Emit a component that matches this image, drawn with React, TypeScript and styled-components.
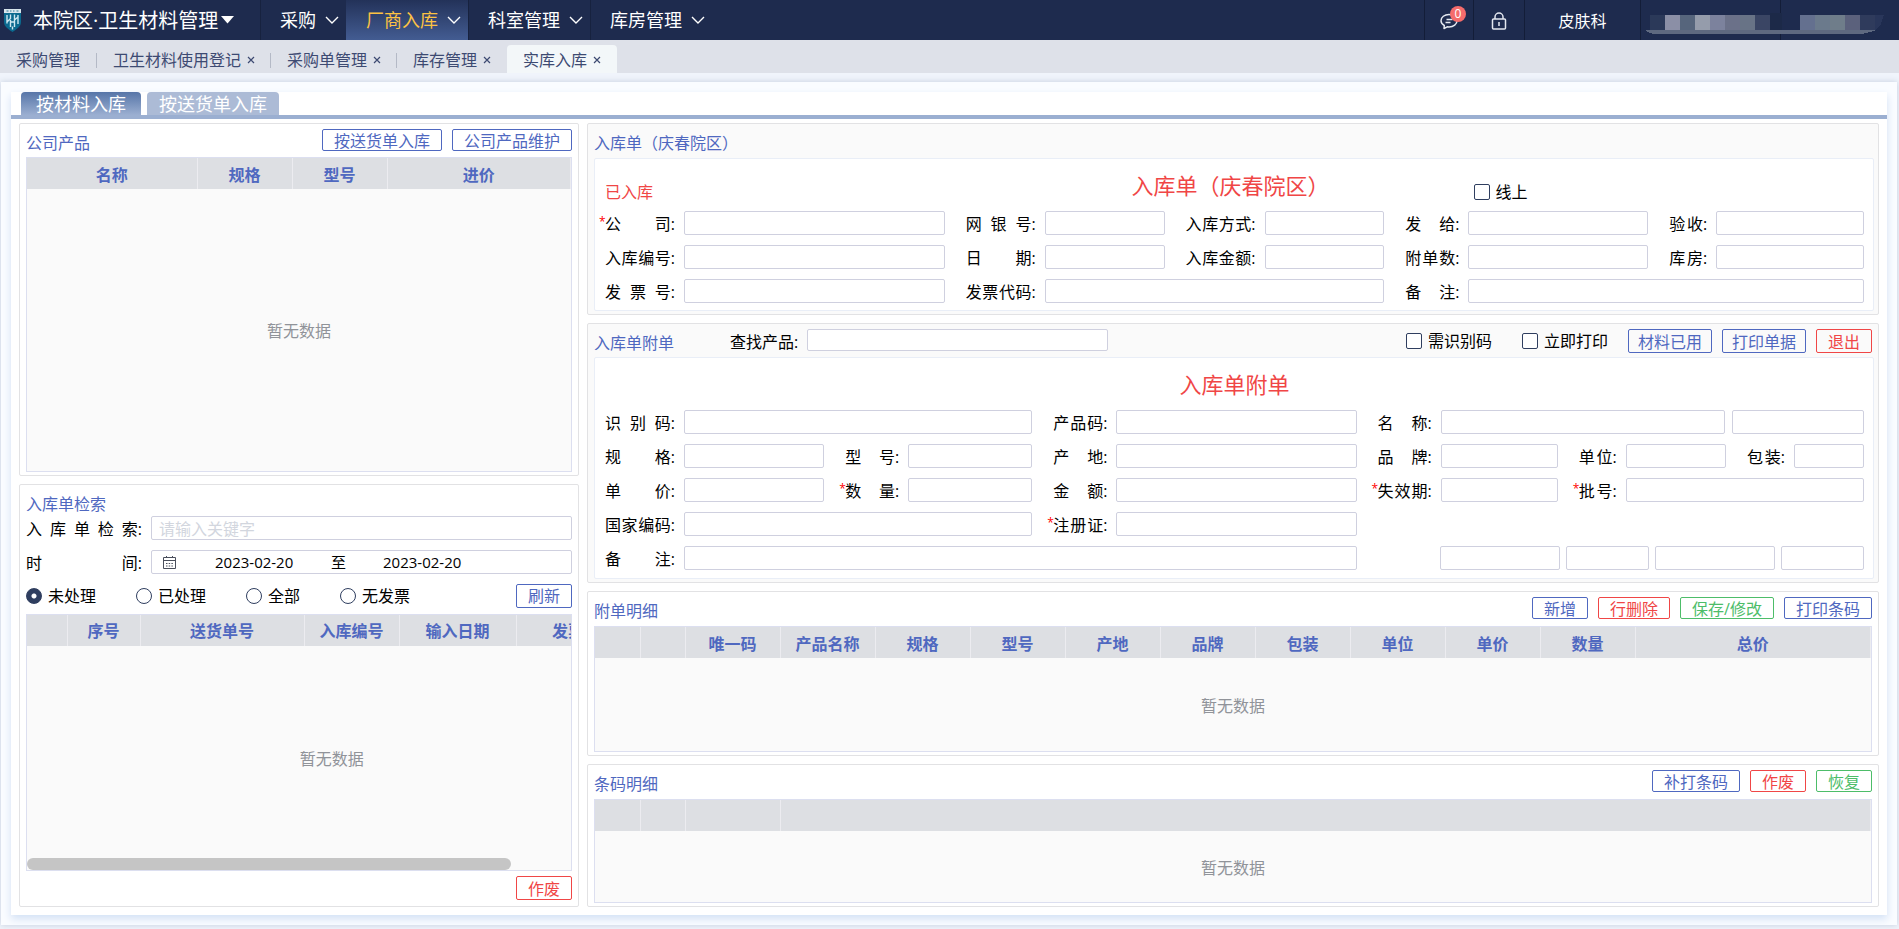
import React, { useId } from "react";
import styled, { createGlobalStyle, css } from "styled-components";

const GlobalStyle = createGlobalStyle`
  *, *::before, *::after { box-sizing: border-box; }
  body {
    margin: 0;
    background: #f0f4fb;
    color: #000;
    font: 16px/24px "Open Sans", "Noto Sans CJK SC", sans-serif;
  }
  button, input { font: inherit; }
`;

type Tone = "blue" | "red" | "green";
const tones: Record<Tone, string> = { blue: "#4f68c0", red: "#f04646", green: "#4dbd69" };

const Page = styled.div`
  min-height: 100vh;
  display: flex;
  flex-direction: column;
`;

/* ---------- header ---------- */

const Header = styled.header`
  height: 40px;
  display: flex;
  background: #1e2b4e;
  color: #fff;
`;

const Brand = styled.button`
  width: 260px;
  padding: 0 0 0 4px;
  display: flex;
  align-items: center;
  border: 0;
  background: none;
  color: inherit;
  font-size: 20px;
  line-height: 28px;
  white-space: nowrap;

  span { margin: 2px 3px 0 12px; }
`;

const NavItem = styled.button<{ $active?: boolean }>`
  padding: 0 7px 0 20px;
  display: flex;
  align-items: center;
  gap: 9px;
  border: 0;
  background: none;
  box-shadow: ${(p) => (p.$active ? "none" : "inset 1px 0 #17223f")};
  color: #fff;
  font-size: 18px;
  line-height: 26px;
  ${(p) =>
    p.$active &&
    css`
      background: linear-gradient(#233259, #435c92);
      color: #fcc243;
    `}
  svg { color: #fff; }
`;

const HeaderTools = styled.div`
  margin-left: auto;
  display: flex;
`;

const Tool = styled.button<{ $width: number }>`
  position: relative;
  width: ${(p) => p.$width}px;
  padding: 2px 0 0;
  display: flex;
  align-items: center;
  justify-content: center;
  border: 0;
  border-left: 1px solid #131d38;
  background: none;
  color: #fff;
  line-height: 24px;
`;

const Badge = styled.span`
  position: absolute;
  top: 6px;
  right: 7px;
  width: 16px;
  height: 16px;
  border-radius: 8px;
  background: #f56c6c;
  font-size: 12px;
  line-height: 16px;
  text-align: center;
`;

const Masked = styled.div`
  width: 259px;
  border-left: 1px solid #131d38;
`;

/* ---------- page tabs ---------- */

const TabBar = styled.nav`
  height: 33px;
  padding-top: 5px;
  display: flex;
  background: #dee1e9;
`;

const PageTab = styled.div<{ $active?: boolean }>`
  height: 28px;
  padding: 2px 16px 0;
  display: flex;
  align-items: center;
  gap: 6px;
  position: relative;
  color: #3d4a72;

  &:first-child { padding-right: 17px; }
  ${(p) =>
    p.$active
      ? css`
          background: #f3f7f9;
          border-radius: 4px 4px 0 0;
        `
      : css`
          & + &::before {
            content: "";
            position: absolute;
            left: -1px;
            top: 8px;
            height: 15px;
            border-left: 1px solid #b4b9c6;
          }
        `}
  a { color: inherit; text-decoration: none; }
  button {
    width: 8px;
    height: 16px;
    padding: 0;
    display: flex;
    align-items: center;
    border: 0;
    background: none;
    color: inherit;
  }
`;

/* ---------- shells ---------- */

const Outer = styled.main`
  flex: 1;
  margin: 9px 2px 4px 1px;
  padding: 10px;
  display: flex;
  flex-direction: column;
  background: #fafcff;
  box-shadow: 0 0 6px #c3ccdc;
`;

const Inner = styled.div`
  flex: 1;
  display: flex;
  flex-direction: column;
  background: #fff;
  box-shadow: 0 4px 8px #d3e1f5;
`;

const ModeTabs = styled.div`
  height: 27px;
  padding-left: 10px;
  display: flex;
  gap: 6px;
  border-bottom: 4px solid #9bafd1;
`;

const ModeTab = styled.button<{ $active?: boolean }>`
  padding: 1px ${(p) => (p.$active ? 15 : 12)}px 0;
  border: 0;
  border-radius: 4px 4px 0 0;
  background: ${(p) => (p.$active ? "linear-gradient(#5675a8, #9bafd1)" : "#acbbd6")};
  color: #fff;
  font-size: 18px;
  line-height: 22px;
`;

const Columns = styled.div`
  flex: 1;
  padding: 4px 8px 8px;
  display: grid;
  grid-template-columns: minmax(0, 560fr) minmax(0, 1292fr);
  gap: 8px;
`;

const Column = styled.div`
  display: flex;
  flex-direction: column;
  gap: 8px;
`;

const Card = styled.section<{ $grow?: number; $tinted?: boolean }>`
  flex: ${(p) => (p.$grow ? `${p.$grow} 1 0px` : "none")};
  padding: 5px ${(p) => (p.$tinted ? 4 : 6)}px 3px 6px;
  display: flex;
  flex-direction: column;
  border: 1px solid #e2e2e4;
  border-radius: 2px;
  background: ${(p) => (p.$tinted ? "#fafafa" : "#fff")};
`;

const CardHead = styled.div<{ $height: number }>`
  height: ${(p) => p.$height}px;
  display: flex;
  align-items: flex-start;
  gap: 10px;
`;

const FormHead = styled(CardHead)`
  padding-right: 2px;
`;

const Heading = styled.h2`
  margin: 2px auto 0 0;
  color: #4f68c0;
  font-size: 16px;
  font-weight: 400;
  line-height: 24px;
`;

const Btn = styled.button<{ $tone?: Tone; $tall?: boolean; $tight?: boolean }>`
  height: ${(p) => (p.$tall ? 24 : 22)}px;
  padding: 1px ${(p) => (p.$tight ? 9 : 11)}px 0;
  border: 1px solid ${(p) => tones[p.$tone ?? "blue"]};
  border-radius: 2px;
  background: transparent;
  color: ${(p) => tones[p.$tone ?? "blue"]};
  line-height: 20px;
  white-space: nowrap;
`;

/* ---------- tables ---------- */

const TableFrame = styled.div`
  flex: 1;
  display: flex;
  flex-direction: column;
  position: relative;
  overflow: hidden;
  border: 1px solid #dcdff0;
  background: #fafafa;
`;

const Grid = styled.table`
  flex: none;
  width: 100%;
  border-collapse: collapse;
  table-layout: fixed;

  th {
    height: 31px;
    padding: 2px 0 0;
    border-right: 1px solid #ececf0;
    background: #dddfe3;
    color: #4f68c0;
    font-weight: 700;
    line-height: 24px;
    white-space: nowrap;
  }
`;

const Scroller = styled.div<{ $width?: number }>`
  flex: 1;
  width: ${(p) => p.$width ?? 100}%;
  display: flex;
  flex-direction: column;
`;

const Empty = styled.p`
  flex: 1;
  margin: 0;
  padding-top: 2px;
  display: flex;
  align-items: center;
  justify-content: center;
  color: #909399;
`;

const ScrollThumb = styled.div`
  position: absolute;
  left: 0;
  bottom: 0;
  width: 89%;
  height: 12px;
  border-radius: 6px;
  background: #c5c5c5;
`;

type Col = [label: string, width?: number];

function DataTable({ columns, span, label }: { columns: Col[]; span?: number; label: string }) {
  return (
    <TableFrame>
      <Scroller $width={span}>
        <Grid aria-label={label}>
          <colgroup>
            {columns.map(([, w], i) => (
              <col key={i} width={w} />
            ))}
          </colgroup>
          <thead>
            <tr>
              {columns.map(([name], i) => (
                <th key={i} scope="col">{name}</th>
              ))}
            </tr>
          </thead>
        </Grid>
        <Empty>暂无数据</Empty>
      </Scroller>
      {span && <ScrollThumb />}
    </TableFrame>
  );
}

/* ---------- forms ---------- */

const FormBox = styled.div<{ $bottom: number }>`
  padding: 13px 9px ${(p) => p.$bottom}px 10px;
  border: 1px solid #e9eef7;
  border-radius: 2px;
  background: #fff;
`;

const TitleRow = styled.div<{ $inset?: number }>`
  height: 39px;
  padding-right: ${(p) => p.$inset ?? 0}px;
  display: grid;
  grid-template-columns: minmax(0, 1fr) auto minmax(0, 1fr);
`;

const FormTitle = styled.h3`
  margin: 0;
  grid-column: 2;
  color: #f04646;
  font-size: 22px;
  font-weight: 400;
  line-height: 26px;
`;

const Status = styled.span`
  padding-top: 8px;
  color: #f04646;
`;

const OnlineCell = styled.div`
  padding: 8px 0 0 144px;
`;

const FormGrid = styled.div<{ $cols: string }>`
  display: grid;
  grid-template-columns: ${(p) => p.$cols};
  gap: 10px 21px;
`;

const FieldBox = styled.div<{ $span: number }>`
  grid-column: span ${(p) => p.$span};
  height: 24px;
  display: flex;
  align-items: center;
  min-width: 0;
`;

const FieldLabel = styled.label<{ $width: number; $required?: boolean }>`
  position: relative;
  flex: none;
  width: ${(p) => p.$width}px;
  margin-right: 9px;
  padding-top: 2px;
  display: flex;
  white-space: nowrap;

  span {
    flex: 1;
    text-align: justify;
    text-align-last: justify;
    white-space: normal;
  }
  ${(p) =>
    p.$required &&
    css`
      &::before {
        content: "*";
        position: absolute;
        left: -6px;
        color: #f00;
        font-size: 12px;
        line-height: 20px;
      }
    `}
`;

const TextBox = styled.input<{ $share?: number }>`
  flex: ${(p) => p.$share ?? 1} 1 0px;
  min-width: 0;
  width: 100%;
  height: 24px;
  padding: 2px 7px 0;
  border: 1px solid #cfd0df;
  border-radius: 2px;
  background: #fff;
  color: #000;
  &::placeholder { color: #d2d6de; opacity: 1; }
`;

const BoxGroup = styled.div`
  flex: 1;
  min-width: 0;
  display: flex;
  gap: 7px;
`;

const Extras = styled.div<{ $span: number }>`
  grid-column: span ${(p) => p.$span};
  padding-left: 62px;
  display: flex;
  gap: 6px;
`;

interface FieldProps {
  label: string;
  width: number;
  span?: number;
  required?: boolean;
  placeholder?: string;
  extra?: string;
}

function Field({ label, width, span = 1, required, placeholder, extra }: FieldProps) {
  const id = useId();
  return (
    <FieldBox $span={span}>
      <FieldLabel htmlFor={id} $width={width} $required={required}>
        <span>{label}</span>:
      </FieldLabel>
      <BoxGroup>
        <TextBox id={id} placeholder={placeholder} $share={extra ? 270 : 1} />
        {extra && <TextBox aria-label={extra} $share={116} />}
      </BoxGroup>
    </FieldBox>
  );
}

const SearchField = styled.div`
  width: 378px;
  margin: 0 auto 0 46px;
  display: flex;

  label { margin: 1px 9px 0 0; white-space: nowrap; }
  input { height: 22px; }
`;

const FirstHeading = styled(Heading)`
  margin-right: 0;
`;

const Choice = styled.label<{ $gap?: number }>`
  margin-right: ${(p) => p.$gap ?? 0}px;
  display: flex;
  align-items: center;
  gap: 6px;
  white-space: nowrap;
`;

const Tick = styled.input`
  appearance: none;
  width: 16px;
  height: 16px;
  margin: 0;
  border: 1px solid #2f3e5f;
  border-radius: 2px;
  background: #fff;
`;

const Radio = styled(Tick)`
  border-radius: 8px;
  &:checked {
    background: radial-gradient(circle, #fff 0 2px, #2f3e5f 3px);
  }
`;

const SearchGrid = styled.div`
  display: grid;
  gap: 10px;
`;

const DateRange = styled.div`
  flex: 1;
  height: 24px;
  padding-left: 11px;
  display: flex;
  align-items: center;
  border: 1px solid #cfd0df;
  border-radius: 2px;
  font-size: 15px;
  line-height: 22px;

  input {
    width: 80px;
    padding: 0;
    border: 0;
    background: none;
    color: #000;
    line-height: 22px;
  }
  input:first-of-type { margin: 0 36px 0 39px; }
  span { margin-right: 37px; }
`;

const RadioRow = styled.div`
  margin-bottom: 6px;
  display: grid;
  grid-template-columns: 110px 110px 94px 1fr auto;
  align-items: center;
`;

const CardFoot = styled.div`
  padding: 5px 0 3px;
  display: flex;
  justify-content: flex-end;
`;

/* ---------- drawings ---------- */

const Logo = () => (
  <svg width="17" height="24" viewBox="0 0 17 24" aria-hidden="true">
    <path d="M0 1h17v13c0 5-4.500 7-8.500 10C4.500 21 0 19 0 14z" fill="#0b6a8f" />
    <path d="M0 1h17v4H0z" fill="#d8e6ec" />
    <path d="M2.500 3h2M6 3h1.500M9 3h1.500M12.500 3h2" stroke="#2d7897" />
    <path d="M3 7v8.500M6.500 6.500v4l-3 3M6.500 12v7M10.500 6.500v12.500M10.500 12l3.500-3M14 7v9M6.500 14h4M8.500 18.500v3" stroke="#cfe8f1" strokeWidth="1.400" fill="none" />
  </svg>
);

const Caret = () => (
  <svg width="13" height="8" viewBox="0 0 13 8" aria-hidden="true">
    <path d="M0 0h13L6.500 7.500z" fill="#fff" />
  </svg>
);

const Chevron = () => (
  <svg width="14" height="8" viewBox="0 0 14 8" fill="none" stroke="currentColor" strokeWidth="1.400" aria-hidden="true">
    <path d="M1 1l6 6 6-6" />
  </svg>
);

const Cross = () => (
  <svg width="8" height="8" viewBox="0 0 8 8" stroke="currentColor" strokeWidth="1.200" aria-hidden="true">
    <path d="M1 1l6 6M7 1L1 7" />
  </svg>
);

const ChatIcon = () => (
  <svg width="18" height="17" viewBox="0 0 18 17" fill="none" stroke="#e4e8f0" strokeWidth="1.500" aria-hidden="true">
    <path d="M4 15.500l.3-3C2 11.300 1 9.800 1 7.800 1 4 4.500 1.500 9 1.500s8 2.800 8 6.300-3.500 6.200-8 6.200c-.6 0-1.200 0-1.800-.2z" strokeLinejoin="round" />
    <path d="M6.500 6.500h6M5.500 9.500h5" />
  </svg>
);

const LockIcon = () => (
  <svg width="16" height="18" viewBox="0 0 16 18" fill="none" stroke="#e4e8f0" strokeWidth="1.500" aria-hidden="true">
    <rect x="1.500" y="7" width="13" height="10" rx="1" />
    <path d="M4 7V5a4 4 0 0 1 8 0v2M8 10v4" />
  </svg>
);

const CalendarIcon = () => (
  <svg width="13" height="14" viewBox="0 0 13 14" fill="none" stroke="#4a4f5c" aria-hidden="true">
    <path d="M.5 2.500h12v11H.5zM.5 5.500h12M3.500 1v2M9.500 1v2" />
    <path d="M3 8.500h7M3 11h7" strokeDasharray="1.500 1.200" />
  </svg>
);

const mosaic: [number, string][] = [
  [9, "#2b3959"], [24, "#8b8fa6"], [39, "#56657c"], [54, "#959cab"], [69, "#7c829d"],
  [84, "#6b7189"], [99, "#687386"], [114, "#3a4564"], [159, "#64708f"], [174, "#6b7a8c"],
  [189, "#6f7d8a"], [204, "#5b617c"], [219, "#2f3b5c"],
];

const UserMosaic = () => (
  <svg width="258" height="40" viewBox="0 0 258 40" shapeRendering="crispEdges" aria-hidden="true">
    <path d="M139.500 0v40" stroke="#131d38" />
    <path d="M129 13h12v17h-12z" fill="#1c2948" />
    {mosaic.map(([x, fill]) => (
      <path key={x} d={`M${x} 15h15v15h-15z`} fill={fill} />
    ))}
    <path d="M234 15h9l-3 9-6 6z" fill="#29365a" />
    <path d="M4 30h231l-6 2-8 2H12l-5-2z" fill="#5e6980" />
  </svg>
);

/* ---------- content ---------- */

const menus = ["采购", "厂商入库", "科室管理", "库房管理"];
const pageTabs = ["采购管理", "卫生材料使用登记", "采购单管理", "库存管理", "实库入库"];

const productCols: Col[] = [["名称", 170], ["规格", 95], ["型号", 95], ["进价"]];
const orderCols: Col[] = [["", 40], ["序号", 73], ["送货单号", 164], ["入库编号", 95], ["输入日期", 117], ["发票号"]];
const detailCols: Col[] = [
  ["", 45], ["", 45], ["唯一码", 95], ["产品名称", 95], ["规格", 95], ["型号", 95], ["产地", 95],
  ["品牌", 95], ["包装", 95], ["单位", 95], ["单价", 95], ["数量", 95], ["总价"],
];
const barcodeCols: Col[] = [["", 45], ["", 45], ["", 95], [""]];

const HEADER_COLS = "340fr 199fr 199fr 243fr 195fr";
const DETAIL_COLS = "219fr 187fr 303fr 180fr 147fr 117fr";

export default function App() {
  const searchId = useId();
  const dateId = useId();
  return (
    <Page>
      <GlobalStyle />
      <Header>
        <Brand type="button">
          <Logo />
          <span>本院区·卫生材料管理</span>
          <Caret />
        </Brand>
        {menus.map((m) => (
          <NavItem key={m} type="button" $active={m === "厂商入库"}>
            {m}
            <Chevron />
          </NavItem>
        ))}
        <HeaderTools>
          <Tool type="button" aria-label="消息" $width={49}>
            <ChatIcon />
            <Badge>0</Badge>
          </Tool>
          <Tool type="button" aria-label="锁定" $width={51}>
            <LockIcon />
          </Tool>
          <Tool type="button" $width={116}>皮肤科</Tool>
          <Masked>
            <UserMosaic />
          </Masked>
        </HeaderTools>
      </Header>

      <TabBar>
        {pageTabs.map((t, i) => (
          <PageTab key={t} $active={t === "实库入库"}>
            <a href="#">{t}</a>
            {i > 0 && (
              <button type="button" aria-label={`关闭${t}`}>
                <Cross />
              </button>
            )}
          </PageTab>
        ))}
      </TabBar>

      <Outer>
        <Inner>
          <ModeTabs>
            <ModeTab type="button" $active>按材料入库</ModeTab>
            <ModeTab type="button">按送货单入库</ModeTab>
          </ModeTabs>
          <Columns>
            <Column>
              <Card $grow={352}>
                <CardHead $height={28}>
                  <Heading>公司产品</Heading>
                  <Btn type="button">按送货单入库</Btn>
                  <Btn type="button">公司产品维护</Btn>
                </CardHead>
                <DataTable label="公司产品" columns={productCols} />
              </Card>

              <Card $grow={424}>
                <CardHead $height={26}>
                  <Heading>入库单检索</Heading>
                </CardHead>
                <SearchGrid>
                  <Field label="入库单检索" width={116} placeholder="请输入关键字" />
                  <FieldBox $span={1}>
                    <FieldLabel htmlFor={dateId} $width={116}>
                      <span>时间</span>:
                    </FieldLabel>
                    <DateRange>
                      <CalendarIcon />
                      <input id={dateId} defaultValue="2023-02-20" />
                      <span>至</span>
                      <input aria-label="结束日期" defaultValue="2023-02-20" />
                    </DateRange>
                  </FieldBox>
                  <RadioRow>
                    {["未处理", "已处理", "全部", "无发票"].map((r, i) => (
                      <Choice key={r}>
                        <Radio type="radio" name="state" defaultChecked={i === 0} />
                        {r}
                      </Choice>
                    ))}
                    <Btn type="button" $tall>刷新</Btn>
                  </RadioRow>
                </SearchGrid>
                <DataTable label="入库单" columns={orderCols} span={112} />
                <CardFoot>
                  <Btn type="button" $tone="red" $tall>作废</Btn>
                </CardFoot>
              </Card>
            </Column>

            <Column>
              <Card $tinted>
                <CardHead $height={29}>
                  <Heading>入库单（庆春院区）</Heading>
                </CardHead>
                <FormBox $bottom={7}>
                  <TitleRow $inset={8}>
                    <Status>已入库</Status>
                    <FormTitle>入库单（庆春院区）</FormTitle>
                    <OnlineCell>
                      <Choice>
                        <Tick type="checkbox" />
                        线上
                      </Choice>
                    </OnlineCell>
                  </TitleRow>
                  <FormGrid $cols={HEADER_COLS}>
                    <Field label="公司" width={70} required />
                    <Field label="网银号" width={70} />
                    <Field label="入库方式" width={70} />
                    <Field label="发给" width={54} />
                    <Field label="验收" width={38} />
                    <Field label="入库编号" width={70} />
                    <Field label="日期" width={70} />
                    <Field label="入库金额" width={70} />
                    <Field label="附单数" width={54} />
                    <Field label="库房" width={38} />
                    <Field label="发票号" width={70} />
                    <Field label="发票代码" width={70} span={2} />
                    <Field label="备注" width={54} span={2} />
                  </FormGrid>
                </FormBox>
              </Card>

              <Card $tinted>
                <FormHead $height={28}>
                  <FirstHeading>入库单附单</FirstHeading>
                  <SearchField>
                    <label htmlFor={searchId}>查找产品:</label>
                    <TextBox id={searchId} />
                  </SearchField>
                  <Choice $gap={20}>
                    <Tick type="checkbox" />
                    需识别码
                  </Choice>
                  <Choice $gap={10}>
                    <Tick type="checkbox" />
                    立即打印
                  </Choice>
                  <Btn type="button" $tall $tight>材料已用</Btn>
                  <Btn type="button" $tall $tight>打印单据</Btn>
                  <Btn type="button" $tall $tone="red">退出</Btn>
                </FormHead>
                <FormBox $bottom={8}>
                  <TitleRow>
                    <FormTitle>入库单附单</FormTitle>
                  </TitleRow>
                  <FormGrid $cols={DETAIL_COLS}>
                    <Field label="识别码" width={70} span={2} />
                    <Field label="产品码" width={54} />
                    <Field label="名称" width={54} span={3} extra="名称补充" />
                    <Field label="规格" width={70} />
                    <Field label="型号" width={54} />
                    <Field label="产地" width={54} />
                    <Field label="品牌" width={54} />
                    <Field label="单位" width={38} />
                    <Field label="包装" width={38} />
                    <Field label="单价" width={70} />
                    <Field label="数量" width={54} required />
                    <Field label="金额" width={54} />
                    <Field label="失效期" width={54} required />
                    <Field label="批号" width={38} span={2} required />
                    <Field label="国家编码" width={70} span={2} />
                    <Field label="注册证" width={54} required />
                    <Extras $span={3} />
                    <Field label="备注" width={70} span={3} />
                    <Extras $span={3}>
                      <TextBox $share={104} aria-label="备注一" />
                      <TextBox $share={67} aria-label="备注二" />
                      <TextBox $share={104} aria-label="备注三" />
                      <TextBox $share={67} aria-label="备注四" />
                    </Extras>
                  </FormGrid>
                </FormBox>
              </Card>

              <Card $grow={166}>
                <CardHead $height={29}>
                  <Heading>附单明细</Heading>
                  <Btn type="button">新增</Btn>
                  <Btn type="button" $tone="red">行删除</Btn>
                  <Btn type="button" $tone="green">保存/修改</Btn>
                  <Btn type="button">打印条码</Btn>
                </CardHead>
                <DataTable label="附单明细" columns={detailCols} />
              </Card>

              <Card $grow={142}>
                <CardHead $height={29}>
                  <Heading>条码明细</Heading>
                  <Btn type="button">补打条码</Btn>
                  <Btn type="button" $tone="red">作废</Btn>
                  <Btn type="button" $tone="green">恢复</Btn>
                </CardHead>
                <DataTable label="条码明细" columns={barcodeCols} />
              </Card>
            </Column>
          </Columns>
        </Inner>
      </Outer>
    </Page>
  );
}
